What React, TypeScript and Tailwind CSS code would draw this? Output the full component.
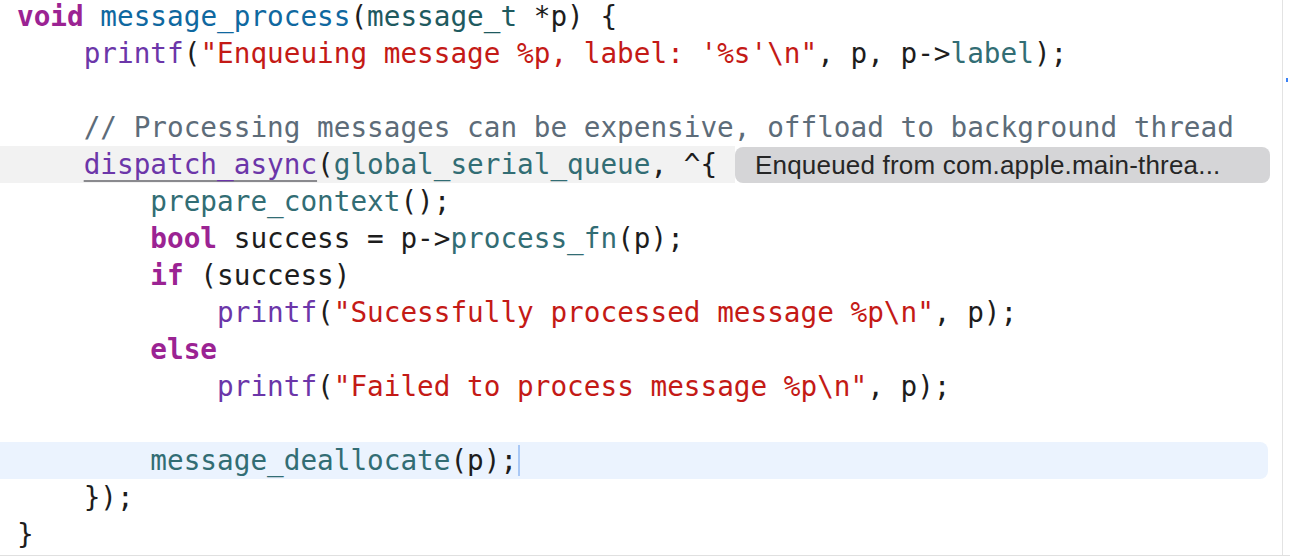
import React from "react";

const kw = "text-[#9b2393] font-bold";
const decl = "text-[#0f68a0]";
const typ = "text-[#1f5a5f]";
const fn = "text-[#6c36a9]";
const str = "text-[#c41a16]";
const proj = "text-[#326d74]";
const cmt = "text-[#5d6c79]";

type Tok = [string, string?];

const lines: Tok[][] = [
  [["void", kw], [" "], ["message_process", decl], ["("], ["message_t", typ], [" *p) {"]],
  [["    "], ["printf", fn], ["("], ["\"Enqueuing message %p, label: '%s'\\n\"", str], [", p, p->"], ["label", proj], [");"]],
  [],
  [["    "], ["// Processing messages can be expensive, offload to background thread", cmt]],
  [],
  [["        "], ["prepare_context", proj], ["();"]],
  [["        "], ["bool", kw], [" success = p->"], ["process_fn", proj], ["(p);"]],
  [["        "], ["if", kw], [" (success)"]],
  [["            "], ["printf", fn], ["("], ["\"Sucessfully processed message %p\\n\"", str], [", p);"]],
  [["        "], ["else", kw]],
  [["            "], ["printf", fn], ["("], ["\"Failed to process message %p\\n\"", str], [", p);"]],
  [],
  [],
  [["    });"]],
  [["}"]],
];

const Toks = ({ toks }: { toks: Tok[] }) => (
  <>
    {toks.map(([t, c], i) => (
      <span key={i} className={c}>
        {t}
      </span>
    ))}
  </>
);

const Line = ({ toks }: { toks: Tok[] }) => (
  <div className="h-[37px] leading-[37px] pl-[17px] whitespace-pre">
    <Toks toks={toks} />
  </div>
);

export default function App() {
  return (
    <div className="w-[1290px] h-[560px] bg-white overflow-hidden flex flex-col">
      <div className="flex flex-1 min-h-0">
        <div className="w-[1283px] border-r border-[#e3e3e3] overflow-hidden">
          <div
            className="-mt-[2px] text-[27.7px] text-[#1d1d1d]"
            style={{ fontFamily: '"DejaVu Sans Mono", "Liberation Mono", monospace' }}
          >
            {lines.map((toks, i) => {
              if (i === 4) {
                return (
                  <div key={i} className="h-[37px] leading-[37px] flex whitespace-pre">
                    <div className="w-[735px] bg-[#f2f2f2] pl-[17px]">
                      <span>{"    "}</span>
                      <span className="text-[#6c36a9] underline decoration-[#8a8a8e] decoration-2 underline-offset-[6px]">
                        dispatch_async
                      </span>
                      <span>(</span>
                      <span className={proj}>global_serial_queue</span>
                      <span>, ^{"{"}</span>
                    </div>
                    <div
                      className="w-[535px] h-[36px] mt-[1px] rounded-lg bg-[#d5d5d7] pl-[20px] text-[26px] tracking-[0.2px] leading-[36px] text-[#262626]"
                      style={{ fontFamily: '"Liberation Sans", Arial, sans-serif' }}
                    >
                      Enqueued from com.apple.main-threa...
                    </div>
                  </div>
                );
              }
              if (i === 12) {
                return (
                  <div
                    key={i}
                    className="h-[37px] leading-[37px] w-[1268px] rounded-r-lg bg-[#ebf3fe] pl-[17px] whitespace-pre flex items-center"
                  >
                    <span>{"        "}</span>
                    <span className={proj}>message_deallocate</span>
                    <span>(p);</span>
                    <span className="inline-block w-[2px] h-[31px] bg-[#a9c8f5] ml-[1px]" />
                  </div>
                );
              }
              return <Line key={i} toks={toks} />;
            })}
          </div>
        </div>
        <div className="flex-1 relative">
          <div className="absolute left-[3px] top-[78px] w-[2px] h-[4px] bg-[#3b82f6]" />
        </div>
      </div>
      <div className="h-[5px] border-t border-[#e0e0e0] bg-white" />
    </div>
  );
}
